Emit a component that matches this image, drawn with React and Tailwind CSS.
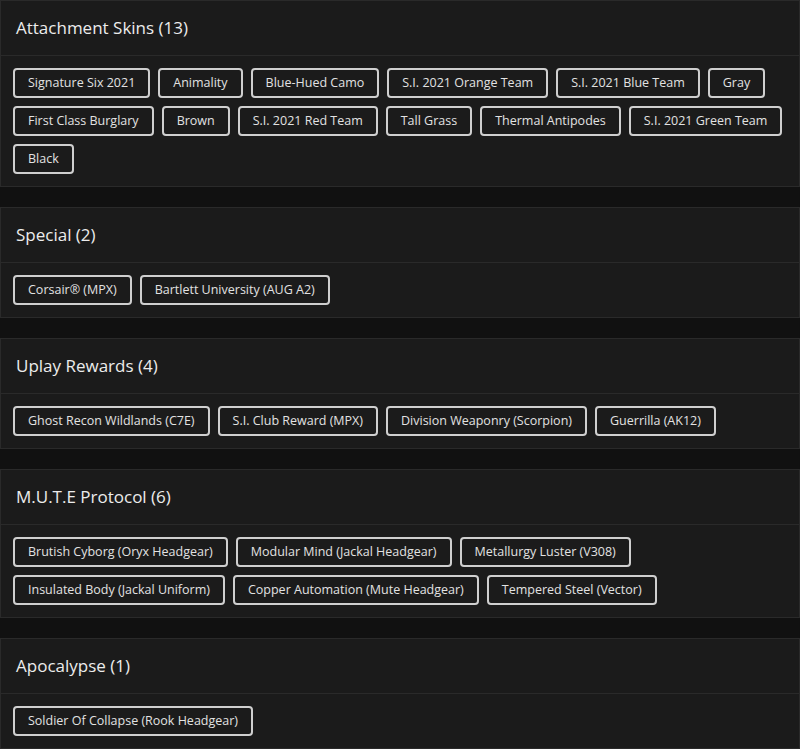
import React from "react";

// sections of the unlock list
const sections = [
  {
    title: "Attachment Skins (13)",
    items: [
      "Signature Six 2021",
      "Animality",
      "Blue-Hued Camo",
      "S.I. 2021 Orange Team",
      "S.I. 2021 Blue Team",
      "Gray",
      "First Class Burglary",
      "Brown",
      "S.I. 2021 Red Team",
      "Tall Grass",
      "Thermal Antipodes",
      "S.I. 2021 Green Team",
      "Black",
    ],
  },
  { title: "Special (2)", items: ["Corsair® (MPX)", "Bartlett University (AUG A2)"] },
  {
    title: "Uplay Rewards (4)",
    items: [
      "Ghost Recon Wildlands (C7E)",
      "S.I. Club Reward (MPX)",
      "Division Weaponry (Scorpion)",
      "Guerrilla (AK12)",
    ],
  },
  {
    title: "M.U.T.E Protocol (6)",
    items: [
      "Brutish Cyborg (Oryx Headgear)",
      "Modular Mind (Jackal Headgear)",
      "Metallurgy Luster (V308)",
      "Insulated Body (Jackal Uniform)",
      "Copper Automation (Mute Headgear)",
      "Tempered Steel (Vector)",
    ],
  },
  { title: "Apocalypse (1)", items: ["Soldier Of Collapse (Rook Headgear)"] },
];

const Section = ({ title, items }) => (
  <section className="bg-[#1b1b1b] border border-[#2a2a2a]">
    <div className="h-[55px] flex items-center px-[15px] border-b border-[#2a2a2a]">
      <h2 className="text-[17px] font-medium text-[#ececec]">{title}</h2>
    </div>
    <div className="flex flex-wrap gap-2 px-3 py-3">
      {items.map((item) => (
        <span
          key={item}
          className="h-[30px] flex items-center px-[13px] border-2 border-[#cfcfcf] rounded-[4px] text-[12.5px] text-[#e2e2e2]"
        >
          {item}
        </span>
      ))}
    </div>
  </section>
);

export default function App() {
  return (
    <div
      className="min-h-screen bg-[#111111] flex flex-col gap-5"
      style={{ fontFamily: '"Open Sans", "Noto Sans", sans-serif' }}
    >
      {sections.map((s) => (
        <Section key={s.title} title={s.title} items={s.items} />
      ))}
    </div>
  );
}
